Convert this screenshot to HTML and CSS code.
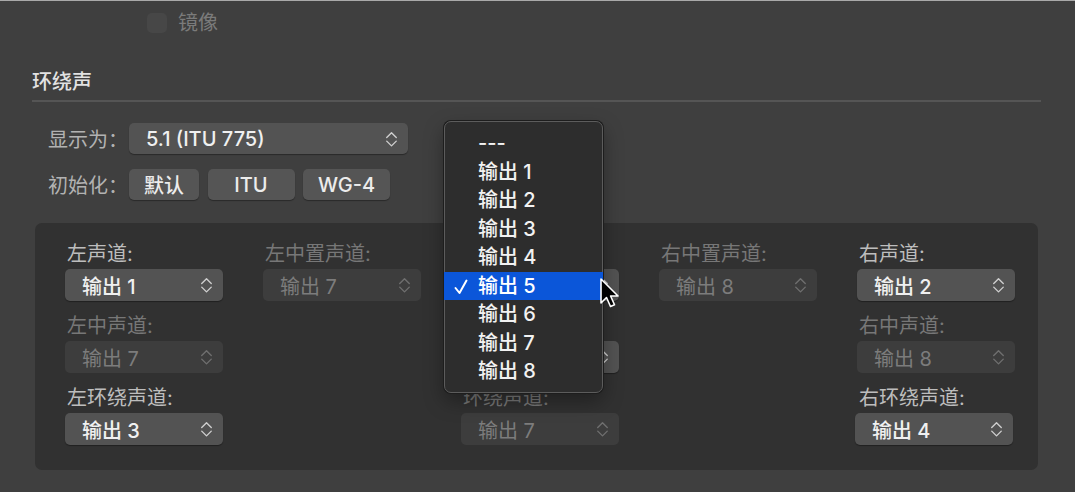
FILE: index.html
```html
<!DOCTYPE html>
<html lang="zh-CN">
<head>
    <meta charset="UTF-8">
    <meta name="viewport" content="width=device-width, initial-scale=1.0">
    <link rel="stylesheet" href="styles.css">
    <title>环绕声</title>
</head>
<body>
    <div class="pane">
        <div class="check-row">
            <span class="checkbox"></span>
            <span class="check-label">镜像</span>
        </div>

        <section class="surround">
            <h2 class="section-title">环绕声</h2>

            <div class="form-row">
                <span class="row-label">显示为：</span>
                <div class="popup wide">
                    <span>5.1 (ITU 775)</span>
                    <svg class="chev" viewBox="0 0 12 17"><path d="M1.5 7 6 2.5 10.5 7M1.5 10.5 6 15 10.5 10.5"/></svg>
                </div>
            </div>

            <div class="form-row second">
                <span class="row-label">初始化：</span>
                <div class="buttons">
                    <button class="btn narrow">默认</button>
                    <button class="btn">ITU</button>
                    <button class="btn">WG-4</button>
                </div>
            </div>

            <div class="channels">
                <div class="channel-col">
                    <div class="field">
                        <span class="field-label">左声道:</span>
                        <div class="popup"><span>输出 1</span><svg class="chev" viewBox="0 0 12 17"><path d="M1.5 7 6 2.5 10.5 7M1.5 10.5 6 15 10.5 10.5"/></svg></div>
                    </div>
                    <div class="field off">
                        <span class="field-label">左中声道:</span>
                        <div class="popup"><span>输出 7</span><svg class="chev" viewBox="0 0 12 17"><path d="M1.5 7 6 2.5 10.5 7M1.5 10.5 6 15 10.5 10.5"/></svg></div>
                    </div>
                    <div class="field">
                        <span class="field-label">左环绕声道:</span>
                        <div class="popup"><span>输出 3</span><svg class="chev" viewBox="0 0 12 17"><path d="M1.5 7 6 2.5 10.5 7M1.5 10.5 6 15 10.5 10.5"/></svg></div>
                    </div>
                </div>

                <div class="channel-col">
                    <div class="field off">
                        <span class="field-label">左中置声道:</span>
                        <div class="popup"><span>输出 7</span><svg class="chev" viewBox="0 0 12 17"><path d="M1.5 7 6 2.5 10.5 7M1.5 10.5 6 15 10.5 10.5"/></svg></div>
                    </div>
                </div>

                <div class="channel-col">
                    <div class="field">
                        <span class="field-label">中置声道:</span>
                        <div class="popup"><span>输出 5</span><svg class="chev" viewBox="0 0 12 17"><path d="M1.5 7 6 2.5 10.5 7M1.5 10.5 6 15 10.5 10.5"/></svg></div>
                    </div>
                    <div class="field">
                        <span class="field-label">低音声道:</span>
                        <div class="popup"><span>输出 6</span><svg class="chev" viewBox="0 0 12 17"><path d="M1.5 7 6 2.5 10.5 7M1.5 10.5 6 15 10.5 10.5"/></svg></div>
                    </div>
                    <div class="field off">
                        <span class="field-label">环绕声道:</span>
                        <div class="popup"><span>输出 7</span><svg class="chev" viewBox="0 0 12 17"><path d="M1.5 7 6 2.5 10.5 7M1.5 10.5 6 15 10.5 10.5"/></svg></div>
                    </div>
                </div>

                <div class="channel-col">
                    <div class="field off">
                        <span class="field-label">右中置声道:</span>
                        <div class="popup"><span>输出 8</span><svg class="chev" viewBox="0 0 12 17"><path d="M1.5 7 6 2.5 10.5 7M1.5 10.5 6 15 10.5 10.5"/></svg></div>
                    </div>
                </div>

                <div class="channel-col">
                    <div class="field">
                        <span class="field-label">右声道:</span>
                        <div class="popup"><span>输出 2</span><svg class="chev" viewBox="0 0 12 17"><path d="M1.5 7 6 2.5 10.5 7M1.5 10.5 6 15 10.5 10.5"/></svg></div>
                    </div>
                    <div class="field off">
                        <span class="field-label">右中声道:</span>
                        <div class="popup"><span>输出 8</span><svg class="chev" viewBox="0 0 12 17"><path d="M1.5 7 6 2.5 10.5 7M1.5 10.5 6 15 10.5 10.5"/></svg></div>
                    </div>
                    <div class="field">
                        <span class="field-label">右环绕声道:</span>
                        <div class="popup shifted"><span>输出 4</span><svg class="chev" viewBox="0 0 12 17"><path d="M1.5 7 6 2.5 10.5 7M1.5 10.5 6 15 10.5 10.5"/></svg></div>
                    </div>
                </div>
            </div>
        </section>

        <!-- open menu of the centre channel popup -->
        <ul class="menu">
            <li>---</li>
            <li>输出 1</li>
            <li>输出 2</li>
            <li>输出 3</li>
            <li>输出 4</li>
            <li class="selected"><svg class="tick" viewBox="0 0 14 16"><path d="M1.5 9 5.5 14 12.5 1.5"/></svg>输出 5</li>
            <li>输出 6</li>
            <li>输出 7</li>
            <li>输出 8</li>
        </ul>

        <svg class="cursor" viewBox="0 0 22 34" width="22" height="34">
            <path d="M2 2 L2 26 L7.5 20.5 L11.5 29.5 L15.5 27.8 L11.6 19 L19 19 Z"/>
        </svg>
    </div>
</body>
</html>
```

FILE: styles.css
```css
body {
    margin: 0;
    background-color: #3f3f3f;
    font-family: Inter, "Noto Sans CJK SC", sans-serif;
    font-size: 20px;
    color: #e4e4e4;
}

.pane {
    position: relative;
    height: 492px;
    border-top: 1px solid #a9a9a9;
    box-sizing: border-box;
    overflow: hidden;
}

.check-row {
    display: flex;
    align-items: center;
    gap: 11px;
    margin: 12px 0 0 147px;
    height: 20px;
}

.checkbox {
    width: 20px;
    height: 20px;
    border-radius: 5px;
    background-color: #474747;
}

.check-label {
    color: #7b7b7b;
    line-height: 20px;
}

.surround {
    margin: 0 34px 0 32px;
}

.section-title {
    margin: 37px 0 0;
    padding-bottom: 6px;
    font-size: 20px;
    font-weight: 500;
    line-height: 24px;
    color: #e2e2e2;
    border-bottom: 2px solid #555555;
}

.form-row {
    display: flex;
    align-items: center;
    margin-top: 21px;
    padding-left: 16px;
    height: 31px;
}

.form-row.second {
    margin-top: 15px;
}

.row-label {
    width: 81px;
    color: #b2b2b2;
}

.buttons {
    display: flex;
    gap: 8.5px;
}

.btn {
    width: 87px;
    height: 31px;
    padding: 0;
    border: none;
    border-radius: 5px;
    background-color: #555555;
    box-shadow: 0 1px 1px rgba(0, 0, 0, 0.35);
    color: #ececec;
    font-family: inherit;
    font-size: 20px;
    font-weight: 500;
}

.btn.narrow {
    width: 70px;
}

.popup {
    display: flex;
    align-items: center;
    justify-content: space-between;
    box-sizing: border-box;
    width: 158px;
    height: 32px;
    padding: 0 10px 0 17px;
    border-radius: 5px;
    background-color: #535353;
    box-shadow: 0 1px 1px rgba(0, 0, 0, 0.35);
    color: #f0f0f0;
    font-weight: 500;
}

.popup.wide {
    width: 279px;
    height: 31px;
}

.popup.shifted {
    margin-left: -2px;
}

.chev {
    width: 13px;
    height: 18px;
    fill: none;
    stroke: #cfcfcf;
    stroke-width: 1.3;
    stroke-linecap: round;
    stroke-linejoin: round;
}

.channels {
    display: flex;
    gap: 40px;
    margin: 23px 3px 0;
    padding: 20px 30px 25px;
    border-radius: 7px;
    background-color: #313131;
}

.channel-col {
    display: flex;
    flex-direction: column;
    gap: 14px;
    width: 158px;
}

.field {
    display: flex;
    flex-direction: column;
    gap: 4px;
}

.field-label {
    padding-left: 2px;
    line-height: 22px;
    color: #bdbdbd;
}

.field.off .field-label {
    color: #777777;
}

.field.off .popup {
    background-color: #3d3d3d;
    box-shadow: none;
    color: #7c7c7c;
    font-weight: 400;
}

.field.off .chev {
    stroke: #6f6f6f;
}

.menu {
    position: absolute;
    left: 444px;
    top: 120px;
    width: 159px;
    box-sizing: border-box;
    margin: 0;
    padding: 7px 0 6px;
    list-style: none;
    border: 1px solid #5c5c5c;
    border-radius: 7px;
    background-color: #2d2d2d;
    box-shadow: 0 0 0 1px #1d1d1d, 0 8px 20px rgba(0, 0, 0, 0.35);
}

.menu li {
    position: relative;
    height: 28.5px;
    line-height: 28.5px;
    padding-left: 33px;
    color: #f2f2f2;
    font-weight: 500;
}

.menu li.selected {
    margin: 0 -1px;
    padding-left: 34px;
    background-color: #0b56d9;
    color: #ffffff;
}

.tick {
    position: absolute;
    left: 10px;
    top: 7px;
    width: 14px;
    height: 16px;
    fill: none;
    stroke: #ffffff;
    stroke-width: 2;
    stroke-linecap: round;
    stroke-linejoin: round;
}

.cursor {
    position: absolute;
    left: 599px;
    top: 276px;
}

.cursor path {
    fill: #000000;
    stroke: #ffffff;
    stroke-width: 1.6;
    stroke-linejoin: round;
}
```
